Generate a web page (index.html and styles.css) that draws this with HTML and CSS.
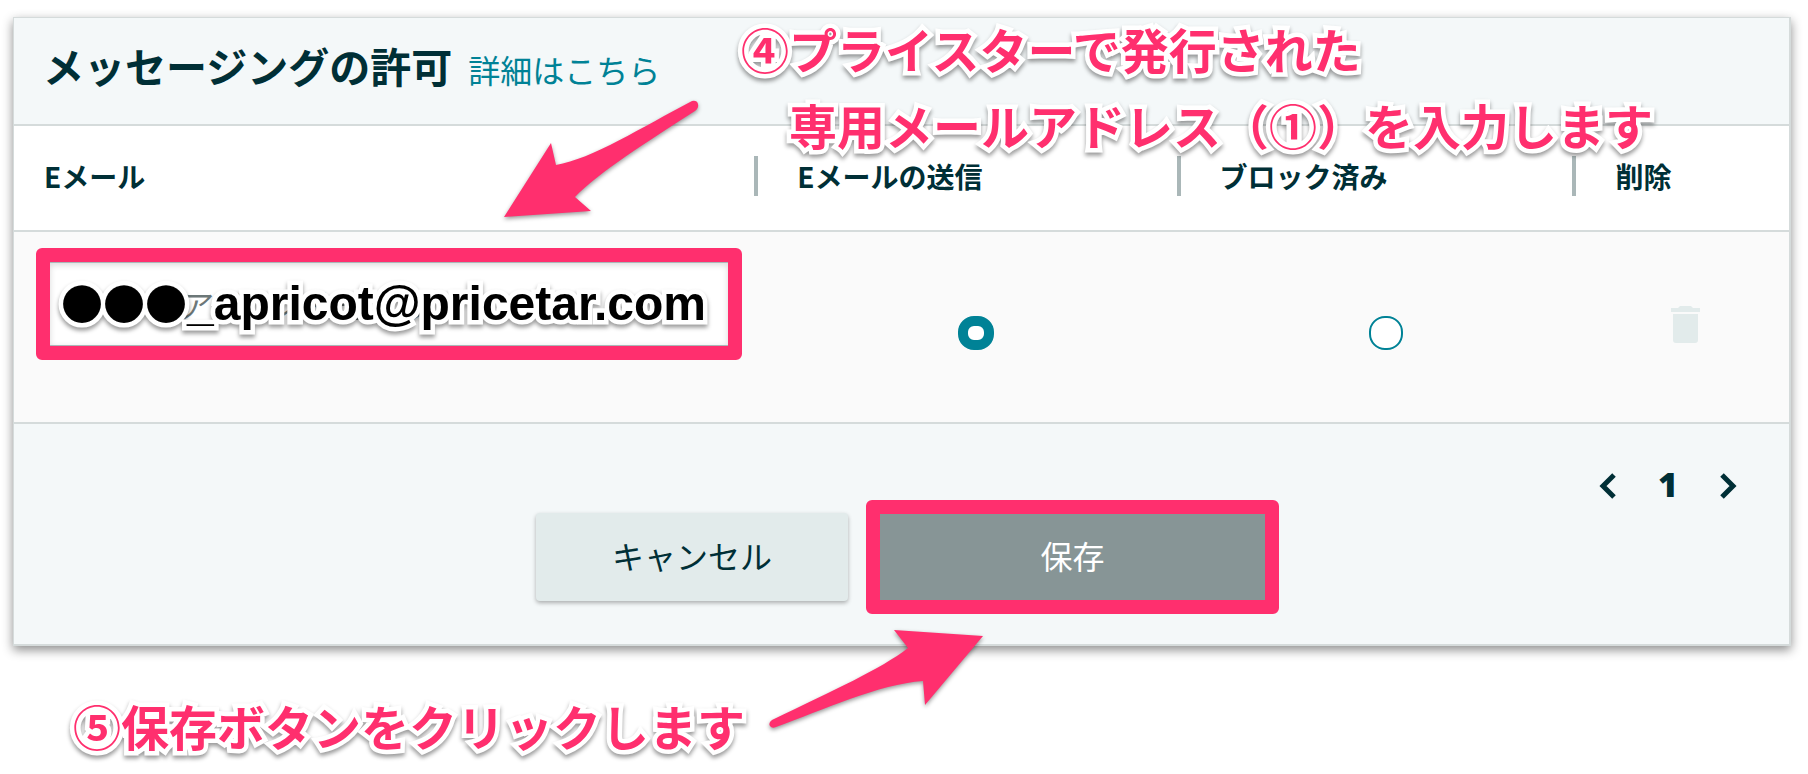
FILE: index.html
```html
<!DOCTYPE html>
<html lang="ja">
<head>
  <meta charset="UTF-8">
  <title>メッセージングの許可</title>
  <link rel="stylesheet" href="styles.css">
</head>
<body>
  <form class="card">
    <header class="card-header">
      <h1>メッセージングの許可</h1>
      <a href="#">詳細はこちら</a>
    </header>

    <table class="permissions">
      <thead>
        <tr>
          <th class="col-email"><span>Eメール</span></th>
          <th class="col-send"><span>Eメールの送信</span></th>
          <th class="col-block"><span>ブロック済み</span></th>
          <th class="col-delete"><span>削除</span></th>
        </tr>
      </thead>
      <tbody>
        <tr>
          <td class="cell-email">
            <div class="highlight email-box">
              <input type="text" aria-label="Eメール" placeholder="Eメールアドレスを追加する">
              <span class="email-note"><span class="dots">●●●</span>_apricot@pricetar.com</span>
            </div>
          </td>
          <td><input type="radio" name="permission" aria-label="Eメールの送信" checked></td>
          <td><input type="radio" name="permission" aria-label="ブロック済み"></td>
          <td class="cell-delete">
            <button type="button" class="icon-button" aria-label="削除" disabled>
              <svg width="30" height="38" viewBox="0 0 30 38"><path fill="#e2ebeb" d="M0 2h7l2-2h11l2 2h7v4H0zM2 8h25v26q0 3-3 3H5q-3 0-3-3z"/></svg>
            </button>
          </td>
        </tr>
      </tbody>
    </table>

    <footer class="card-footer">
      <nav class="pager">
        <button type="button" class="icon-button" aria-label="前へ">
          <svg width="18" height="26" viewBox="0 0 18 26"><path d="M15 2L4 13l11 11"/></svg>
        </button>
        <span>1</span>
        <button type="button" class="icon-button" aria-label="次へ">
          <svg width="18" height="26" viewBox="0 0 18 26"><path d="M3 2l11 11L3 24"/></svg>
        </button>
      </nav>
      <div class="actions">
        <button type="button" class="button cancel">キャンセル</button>
        <div class="highlight">
          <button type="submit" class="button save">保存</button>
        </div>
      </div>
    </footer>
  </form>

  <p class="note note-email">④プライスターで発行された<br><span>専用メールアドレス（①）を入力します</span></p>
  <p class="note note-save">⑤保存ボタンをクリックします</p>

  <svg class="arrow arrow-email" width="200" height="122" viewBox="0 0 200 122">
    <path d="M2 118L49 44l5 22C90 60 140 28 190 2q5-1 6 3t-3 7C145 43 97 73 73 98l16 14z"/>
  </svg>
  <svg class="arrow arrow-save" width="220" height="104" viewBox="0 0 220 104">
    <path d="M214 8L125 2l14 18C112 41 65 62 3 92q-4 3-2 6t6 1C54 82 110 56 154 53l2 24z"/>
  </svg>
</body>
</html>
```
FILE: styles.css
```css
* {
  box-sizing: border-box;
}
body {
  position: relative;
  margin: 0;
  padding: 17px 17px 0 13px;
  min-height: 774px;
  background: white;
  color: #002f36;
  font-family: "Noto Sans CJK JP", sans-serif;
}
.card {
  border: 1px solid #d5dbdb;
  border-width: 1px 2px 2px 1px;
  background: #f4f8f9;
  box-shadow: 0 4px 10px rgba(0,0,0,0.45);
}
.card-header {
  display: flex;
  align-items: baseline;
  gap: 16px;
  height: 106px;
  padding: 17px 29px;
}
h1 {
  margin: 0;
  font-size: 41px;
  line-height: 60px;
}
.card-header a {
  color: #008296;
  font-size: 32px;
  text-decoration: none;
}
.permissions {
  width: 100%;
  border-collapse: collapse;
  table-layout: fixed;
}
.permissions tr {
  border-top: 2px solid #d5dbdb;
  border-bottom: 2px solid #d5dbdb;
}
.permissions thead {
  background: white;
}
.permissions tbody {
  background: #fafafa;
}
.col-email { width: 41.7%; }
.col-send { width: 23.8%; }
.col-block { width: 22.3%; }
th {
  height: 106px;
  padding: 0 0 4px;
  text-align: left;
  font-size: 28px;
}
th span {
  display: block;
  padding-left: 39px;
  border-left: 4px solid #aab7b8;
  line-height: 40px;
}
th.col-email span {
  padding-left: 30px;
  border-left: none;
}
td {
  height: 192px;
  padding: 12px 0 0 22px;
  text-align: center;
  vertical-align: middle;
}
td.cell-email {
  padding: 16px 12px 0 22px;
  vertical-align: top;
}
td.cell-delete {
  padding: 0 0 0 10px;
}
.highlight {
  border: 14px solid #ff2f6e;
  border-radius: 6px;
}
.email-box {
  position: relative;
}
.email-box input {
  display: block;
  width: 100%;
  height: 84px;
  padding: 0 12px;
  border: 1px solid #aab7b8;
  border-width: 1px 0;
  background: white;
  box-shadow: inset 0 2px 6px rgba(0,0,0,0.15);
  font: 32px "Noto Sans CJK JP", sans-serif;
}
.email-box input::placeholder {
  color: #6c7778;
  font-style: italic;
}
.email-note {
  position: absolute;
  top: 10px;
  left: 11px;
  color: black;
  font: bold 48px/60px "Liberation Sans", sans-serif;
  white-space: nowrap;
  pointer-events: none;
}
.dots {
  font-family: "Noto Sans CJK JP", sans-serif;
  font-size: 42px;
}
.note, .email-note {
  -webkit-text-stroke: 9px white;
  paint-order: stroke fill;
  stroke-linejoin: round;
  filter: drop-shadow(0 3px 2px rgba(0,0,0,0.4));
}
input[type="radio"] {
  appearance: none;
  width: 34px;
  height: 34px;
  margin: 0;
  border: 2px solid #008296;
  border-radius: 16px;
  background: white;
  vertical-align: middle;
}
input[type="radio"]:checked {
  width: 36px;
  border-width: 10px;
}
.icon-button {
  display: inline-flex;
  padding: 0;
  border: none;
  background: none;
  cursor: pointer;
}
.card-footer {
  padding: 32px 52px 30px;
}
.pager {
  display: flex;
  justify-content: flex-end;
  align-items: center;
  gap: 41px;
  height: 60px;
  font: 800 34px/60px "Open Sans", sans-serif;
}
.pager span {
  padding-bottom: 5px;
}
.pager path {
  fill: none;
  stroke: #002f36;
  stroke-width: 5;
}
.actions {
  display: flex;
  justify-content: center;
  align-items: center;
  gap: 18px;
  margin-top: -16px;
  padding-left: 12px;
}
.button {
  display: block;
  height: 88px;
  padding: 0 0 4px;
  border: none;
  font: 32px "Noto Sans CJK JP", sans-serif;
  cursor: pointer;
}
.cancel {
  width: 312px;
  border-radius: 4px;
  background: #e2ebeb;
  color: #002f36;
  box-shadow: 0 2px 4px rgba(0,0,0,0.3);
}
.save {
  width: 385px;
  height: 86px;
  background: #879596;
  color: white;
}
/* callouts over the form */
.note {
  position: absolute;
  margin: 0;
  color: #ff2f6e;
  font-size: 48px;
  font-weight: bold;
  line-height: 76px;
  white-space: nowrap;
}
.note-email {
  top: 10px;
  left: 741px;
}
.note-email span {
  padding-left: 48px;
}
.note-save {
  top: 687px;
  left: 73px;
}
.arrow {
  position: absolute;
  fill: #ff2f6e;
  filter: drop-shadow(0 2px 2px rgba(0,0,0,0.4));
  overflow: visible;
}
.arrow-email {
  top: 99px;
  left: 502px;
}
.arrow-save {
  top: 628px;
  left: 769px;
}
```
